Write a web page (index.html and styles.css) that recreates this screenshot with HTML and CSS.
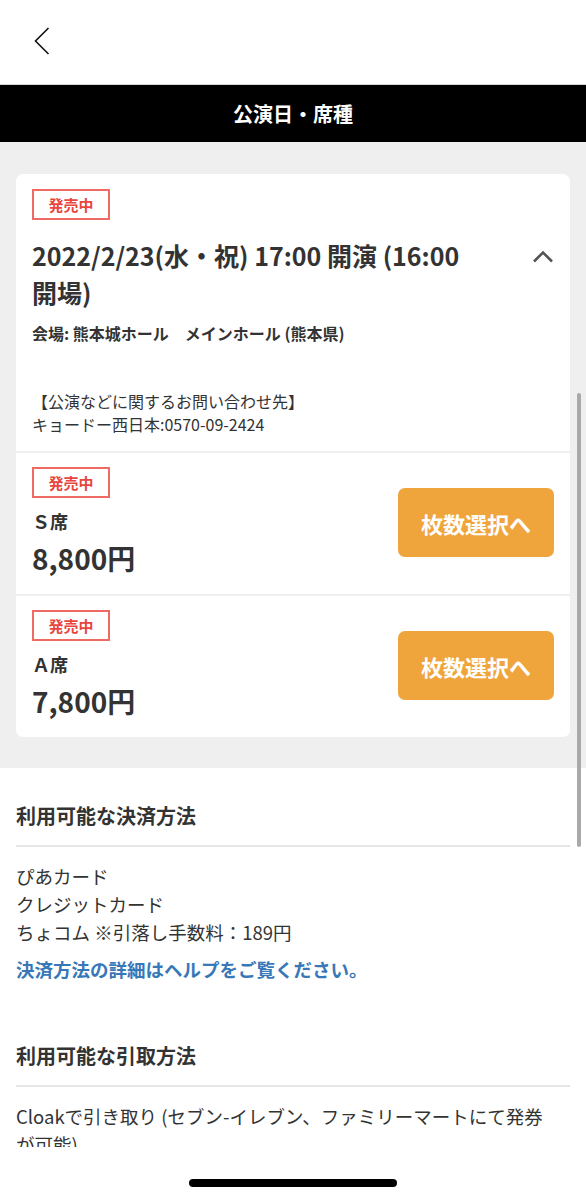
FILE: index.html
```html
<!DOCTYPE html>
<html lang="ja">
<head>
    <meta charset="UTF-8">
    <meta name="viewport" content="width=device-width, initial-scale=1.0">
    <title>公演日・席種</title>
    <link rel="stylesheet" href="styles.css">
</head>
<body>
    <header class="top-bar">
        <a class="back-btn" href="#" aria-label="戻る">
            <svg width="16" height="28" viewBox="0 0 16 28">
                <polyline points="14.5,1 1.5,14 14.5,27" fill="none" stroke="#111" stroke-width="1.6"/>
            </svg>
        </a>
    </header>
    <div class="title-bar">公演日・席種</div>

    <main class="schedule">
        <div class="perf-card">
            <section class="perf-info">
                <span class="status-badge">発売中</span>
                <div class="perf-head">
                    <h1 class="perf-title">2022/2/23(水・祝) 17:00 開演 (16:00 開場)</h1>
                    <svg class="toggle-icon" width="22" height="14" viewBox="0 0 22 14">
                        <polyline points="2,12.5 11,3.5 20,12.5" fill="none" stroke="#555" stroke-width="2.6"/>
                    </svg>
                </div>
                <p class="venue">会場: 熊本城ホール　メインホール (熊本県)</p>
                <p class="contact">【公演などに関するお問い合わせ先】<br>キョードー西日本:0570-09-2424</p>
            </section>

            <section class="seat-row">
                <div class="seat-info">
                    <span class="status-badge">発売中</span>
                    <div class="seat-name">Ｓ席</div>
                    <div class="seat-price">8,800円</div>
                </div>
                <button class="select-btn">枚数選択へ</button>
            </section>

            <section class="seat-row">
                <div class="seat-info">
                    <span class="status-badge">発売中</span>
                    <div class="seat-name">Ａ席</div>
                    <div class="seat-price">7,800円</div>
                </div>
                <button class="select-btn">枚数選択へ</button>
            </section>
        </div>
    </main>

    <section class="info-block">
        <h2 class="info-title">利用可能な決済方法</h2>
        <ul class="info-list">
            <li>ぴあカード</li>
            <li>クレジットカード</li>
            <li>ちょコム ※引落し手数料：189円</li>
        </ul>
        <a class="help-link" href="#">決済方法の詳細はヘルプをご覧ください。</a>
    </section>

    <section class="info-block second">
        <h2 class="info-title">利用可能な引取方法</h2>
        <ul class="info-list">
            <li>Cloakで引き取り (セブン-イレブン、ファミリーマートにて発券が可能)</li>
        </ul>
    </section>

    <div class="scroll-thumb"></div>
    <div class="home-area"><span class="home-bar"></span></div>
</body>
</html>
```

FILE: styles.css
```css
body {
    margin: 0;
    font-family: "Noto Sans CJK JP", "Noto Sans", sans-serif;
    color: #333;
    background-color: #fff;
}
.top-bar {
    height: 84px;
    border-bottom: 1px solid #d6d6d6;
    display: flex;
    align-items: flex-start;
}
.back-btn {
    display: block;
    margin: 27px 0 0 34px;
}
.back-btn svg {
    display: block;
}
.title-bar {
    height: 57px;
    background-color: #000;
    color: #fff;
    font-size: 20px;
    font-weight: bold;
    display: flex;
    justify-content: center;
    align-items: center;
}
.schedule {
    background-color: #efefef;
    padding: 32px 16px 31px;
}
.perf-card {
    background-color: #fff;
    border-radius: 7px;
    overflow: hidden;
}
.status-badge {
    display: inline-block;
    box-sizing: border-box;
    height: 31px;
    width: 78px;
    line-height: 27px;
    text-align: center;
    border: 2px solid #ee6a63;
    color: #e8463f;
    font-size: 15px;
    font-weight: bold;
}
.perf-info {
    padding: 15px 16px 15px;
}
.perf-head {
    display: flex;
    align-items: flex-start;
    margin-top: 17px;
}
.perf-title {
    flex: 1;
    margin: 0 62px 0 0;
    font-size: 25px;
    line-height: 37px;
    font-weight: bold;
}
.toggle-icon {
    margin-top: 12px;
}
.venue {
    margin: 10px 0 0;
    font-size: 16px;
    line-height: 24px;
    font-weight: bold;
}
.contact {
    margin: 45px 0 0;
    font-size: 16px;
    line-height: 23px;
}
.seat-row {
    border-top: 2px solid #efefef;
    padding: 14px 16px 16px;
    display: flex;
    justify-content: space-between;
    align-items: center;
}
.seat-name {
    margin-top: 10px;
    font-size: 18px;
    line-height: 26px;
    font-weight: bold;
}
.seat-price {
    margin-top: 4px;
    font-size: 28px;
    line-height: 40px;
    font-weight: bold;
}
.select-btn {
    width: 156px;
    height: 69px;
    border: none;
    border-radius: 7px;
    background-color: #f0a43c;
    color: #fff;
    font-family: inherit;
    font-size: 22px;
    font-weight: bold;
    cursor: pointer;
}
.info-block {
    padding: 34px 16px 0;
}
.info-block.second {
    padding-top: 59px;
}
.info-title {
    margin: 0;
    padding-bottom: 15px;
    border-bottom: 2px solid #e6e6e6;
    font-size: 20px;
    line-height: 28px;
    font-weight: bold;
}
.info-list {
    list-style: none;
    margin: 15px 0 0;
    padding: 0 20px 0 0;
    font-size: 18.5px;
    line-height: 28px;
}
.help-link {
    display: block;
    margin-top: 9px;
    color: #3877b8;
    font-size: 18.5px;
    line-height: 28px;
    font-weight: bold;
    text-decoration: none;
}
.scroll-thumb {
    position: fixed;
    left: 577px;
    top: 393px;
    width: 4px;
    height: 454px;
    border-radius: 2px;
    background-color: #a9a9a9;
}
.home-area {
    position: fixed;
    left: 0;
    right: 0;
    bottom: 0;
    height: 53px;
    background-color: #fff;
}
.home-bar {
    position: absolute;
    left: 189px;
    top: 32px;
    width: 208px;
    height: 8px;
    border-radius: 4px;
    background-color: #000;
}
```
